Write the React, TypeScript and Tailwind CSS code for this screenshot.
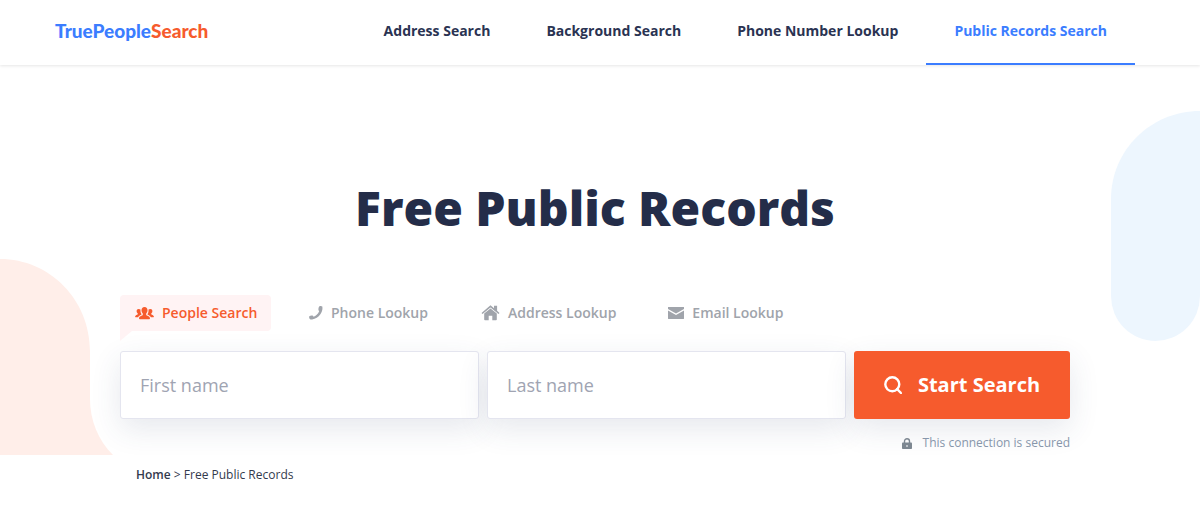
import { useState } from 'react';
import clsx from 'clsx';

const navLinks = [
  { label: 'Address Search', href: '#address' },
  { label: 'Background Search', href: '#background' },
  { label: 'Phone Number Lookup', href: '#phone' },
  { label: 'Public Records Search', href: '#records', active: true },
];

function PeopleIcon() {
  return (
    <svg width="19" height="13" viewBox="0 0 19 13" fill="currentColor" aria-hidden="true">
      <path d="M9.500 0c2 0 3 1.300 3 3.300 0 1.300-.5 2.500-1.300 3.200v1.600c.4.800 3.600.9 3.800 3.200 0 .6-.3.900-.8.900H4.800c-.5 0-.8-.3-.8-.9.200-2.300 3.400-2.400 3.800-3.200V6.500C7 5.800 6.500 4.600 6.500 3.300c0-2 1-3.300 3-3.300z" />
      <path d="M3.700 2c.7 0 1.300.2 1.800.6-.2 1.900.1 3.500 1 4.500v.4c-.9.600-2.700 1-3.400 2.700H.6c-.4 0-.6-.3-.5-.7.200-1.500 2.300-1.700 2.600-2.300V6.300c-.7-.5-1.100-1.200-1.100-2.100C1.600 2.900 2.400 2 3.700 2z" />
      <path d="M15.300 2c-.7 0-1.300.2-1.800.6.2 1.900-.1 3.500-1 4.500v.4c.9.600 2.700 1 3.400 2.700h2.500c.4 0 .6-.3.500-.7-.2-1.500-2.300-1.700-2.600-2.300V6.300c.7-.5 1.100-1.200 1.100-2.100 0-1.300-.8-2.200-2.100-2.200z" />
    </svg>
  );
}

function PhoneIcon() {
  return (
    <svg width="14" height="14" viewBox="0 0 14 14" fill="currentColor" aria-hidden="true">
      <path d="M10.200.5c.8-.6 2.300-.6 3.100.1.500 2.700-.2 5.400-1.900 7.700-2 2.700-4.900 4.700-8.300 5.200-1 .1-1.900-.1-2.500-.8-.5-.7-.6-1.700-.3-2.400.9-.7 2.600-.9 3.600-.5.300.3.500.7.700 1C6.700 10 9 8 10.200 5.200l-.7-.9c-.2-1.300-.1-2.800.7-3.800z" />
    </svg>
  );
}

function HomeIcon() {
  return (
    <svg width="19" height="16" viewBox="0 0 18 16" fill="currentColor" aria-hidden="true">
      <path d="M9 .3l3.500 3V.8h3.100v5L18 8l-1 1.100L9 2.500 1 9.100 0 8z" />
      <path d="M9 3.400l6.300 5.200v5.900c0 .5-.3.800-.8.800h-3.700v-4.500H7.200v4.500H3.500c-.5 0-.8-.3-.8-.8V8.600z" />
    </svg>
  );
}

function MailIcon() {
  return (
    <svg width="16" height="12" viewBox="0 0 16 12" fill="currentColor" aria-hidden="true">
      <path d="M.4 0h15.200c.3 0 .4.100.4.400v1.500L8 6.400 0 1.900V.4C0 .1.100 0 .4 0z" />
      <path d="M0 3.500L8 8l8-4.500v8.100c0 .3-.1.400-.4.400H.4c-.3 0-.4-.1-.4-.4z" />
    </svg>
  );
}

const tabs = [
  { id: 'people', label: 'People Search', icon: <PeopleIcon />, className: 'w-[151px] pl-[15px]' },
  { id: 'phone', label: 'Phone Lookup', icon: <PhoneIcon />, className: 'ml-[38px]' },
  { id: 'address', label: 'Address Lookup', icon: <HomeIcon />, className: 'ml-[53px]' },
  { id: 'email', label: 'Email Lookup', icon: <MailIcon />, className: 'ml-[52px]' },
];

function Header() {
  return (
    <header className="bg-white pr-[10px] shadow-[0_1px_3px_rgba(0,0,0,0.1)]">
      <div className="mx-auto flex h-[65px] max-w-[1080px] items-stretch justify-between">
        <a
          href="#home"
          className="flex items-center pb-[2px] font-['Lato',sans-serif] text-[19px] font-black text-[#3b7dff]"
        >
          TruePeople<span className="text-[#f65b2d]">Search</span>
        </a>
        <nav className="flex">
          {navLinks.map((link) => (
            <a
              key={link.label}
              href={link.href}
              className={clsx(
                'flex items-center border-b-2 px-7 pb-[2px] text-sm font-bold',
                link.active ? 'border-[#3b7dff] text-[#3b7dff]' : 'border-transparent text-[#2a3352]'
              )}
            >
              {link.label}
            </a>
          ))}
        </nav>
      </div>
    </header>
  );
}

function SearchForm() {
  const [tab, setTab] = useState('people');

  return (
    <div className="mx-auto max-w-[950px]">
      <div className="flex h-9">
        {tabs.map((item) => (
          <button
            key={item.id}
            type="button"
            onClick={() => setTab(item.id)}
            className={clsx(
              'relative flex items-center gap-2 rounded text-sm font-semibold whitespace-nowrap',
              item.className,
              tab === item.id ? 'rounded-bl-none bg-[#fff3f4] text-[#f65b2d]' : 'text-[#a0a4ab]'
            )}
          >
            {item.icon}
            {item.label}
            {tab === item.id && (
              <svg className="absolute top-full left-0" width="12" height="10" viewBox="0 0 12 10" aria-hidden="true">
                <path d="M0 0h12L0 10z" fill="#fff3f4" />
              </svg>
            )}
          </button>
        ))}
      </div>

      <form className="mt-5 flex gap-2" onSubmit={(e) => e.preventDefault()}>
        <input
          type="text"
          aria-label="First name"
          placeholder="First name"
          className="h-[68px] min-w-0 flex-1 rounded-[3px] border border-[#e4e5ef] bg-white px-[19px] text-lg shadow-[0_10px_30px_rgba(50,65,110,0.12)] outline-none placeholder:text-[#a0a4b2]"
        />
        <input
          type="text"
          aria-label="Last name"
          placeholder="Last name"
          className="h-[68px] min-w-0 flex-1 rounded-[3px] border border-[#e4e5ef] bg-white px-[19px] text-lg shadow-[0_10px_30px_rgba(50,65,110,0.12)] outline-none placeholder:text-[#a0a4b2]"
        />
        <button
          type="submit"
          className="flex h-[68px] w-[216px] items-center justify-center gap-4 rounded-[3px] bg-[#f65b2d] text-xl font-bold text-white shadow-[0_10px_30px_rgba(50,65,110,0.12)]"
        >
          <svg width="18" height="18" viewBox="0 0 18 18" fill="none" stroke="currentColor" strokeWidth="2.400" aria-hidden="true">
            <circle cx="8.300" cy="8.300" r="7" />
            <path d="M13 13l4 4" strokeLinecap="round" />
          </svg>
          Start Search
        </button>
      </form>

      <p className="mt-4 flex items-center justify-end gap-[11px] text-xs leading-4 text-[#8796ab]">
        <svg width="10" height="11" viewBox="0 0 10 11" aria-hidden="true">
          <path d="M2.500 5V3.200a2.500 2.500 0 0 1 5 0V5" fill="none" stroke="#7d8791" strokeWidth="1.400" />
          <path d="M.8 4.600h8.400c.5 0 .8.300.8.800v4.800c0 .5-.3.800-.8.800H.8c-.5 0-.8-.3-.8-.8V5.400c0-.5.300-.8.800-.8z" fill="#7d8791" />
          <path d="M4.500 7h1v2h-1z" fill="#fff" />
        </svg>
        This connection is secured
      </p>
    </div>
  );
}

export default function App() {
  return (
    <div className="min-h-screen bg-white font-['Open_Sans',sans-serif]">
      <Header />

      <section className="relative isolate overflow-hidden px-4 pt-[111px] pr-[26px] pb-1">
        {/* Background shapes */}
        <svg className="absolute bottom-0 left-0 -z-10" width="113" height="196" viewBox="0 0 113 196" aria-hidden="true">
          <path d="M0 0C50 0 90 41 90 92v48c0 21 8 41 23 56H0z" fill="#ffeee9" />
        </svg>
        <svg className="absolute top-[46px] right-0 -z-10" width="89" height="230" viewBox="0 0 89 230" aria-hidden="true">
          <path d="M89 0C40 0 0 39 0 88v97a44.500 45 0 0 0 89 0z" fill="#edf6fe" />
        </svg>

        <h1 className="mb-[55px] text-center text-5xl leading-[64px] font-extrabold text-[#242d49]">
          Free Public Records
        </h1>
        <SearchForm />
      </section>

      <nav aria-label="Breadcrumb" className="pr-[10px]">
        <div className="mx-auto max-w-[950px] px-4 pt-3 text-xs leading-4 text-[#333a4d]">
          <a href="#home" className="font-semibold">Home</a> &gt; <span>Free Public Records</span>
        </div>
      </nav>
    </div>
  );
}
